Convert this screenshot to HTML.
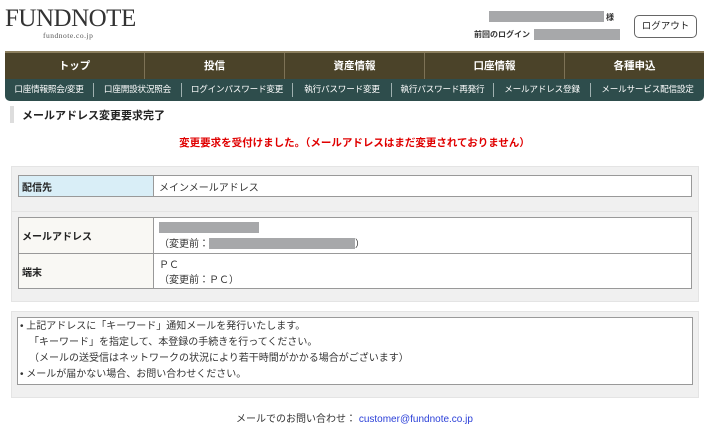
<!DOCTYPE html>
<html><head><meta charset="utf-8"><style>
*{margin:0;padding:0;box-sizing:border-box}
body{width:709px;height:427px;background:#fff;font-family:"Liberation Sans","Noto Sans CJK JP",sans-serif;color:#333;position:relative;overflow:hidden;font-size:10px}
.a{position:absolute}
.gray{background:#a7a8aa}
.nav{left:5px;top:51px;width:699px;height:28px;background:#4b4329;border-top:2px solid #8c7f5e;display:flex}
.nav div{flex:1;color:#fff;font-weight:bold;font-size:10.5px;text-align:center;line-height:26px;border-left:1px solid #7d7256}
.nav div:first-child{border-left:none}
.sub{left:5px;top:79px;width:699px;height:22px;background:#2e4d4c;border-radius:0 0 5px 5px;display:flex}
.sub div{flex:none;color:#fff;font-size:8.6px;text-align:center;white-space:nowrap;border-left:1px solid #a0b0b0;margin:4px 0;line-height:13px;overflow:hidden;letter-spacing:-0.2px}
.sub div:first-child{border-left:none}
.box{left:11px;width:688px;background:#f0f0f0;border:1px solid #e4e4e4}
table{border-collapse:collapse;position:absolute;left:6px;width:674px;background:#fff}
td{border:1px solid #999;font-size:10px;padding:0 5px;vertical-align:middle}
th{border:1px solid #999;font-size:10px;text-align:left;padding:0 3px;background:#f9f8f4;width:135px;font-weight:bold;color:#222}
</style></head><body>
<div class="a" style="left:5px;top:5px;font-family:'Liberation Serif',serif;font-size:25px;color:#333;letter-spacing:-0.5px">FUNDNOTE</div>
<div class="a" style="left:43px;top:31px;font-family:'Liberation Serif',serif;font-size:7.5px;color:#555;letter-spacing:.5px">fundnote.co.jp</div>
<div class="a gray" style="left:489px;top:11px;width:115px;height:11px"></div>
<div class="a" style="left:606px;top:12px;font-size:8px;font-weight:bold">様</div>
<div class="a" style="left:474px;top:29px;font-size:8px;font-weight:bold">前回のログイン</div>
<div class="a gray" style="left:534px;top:29px;width:86px;height:11px"></div>
<div class="a" style="left:634px;top:15px;width:63px;height:23px;border:1px solid #666;border-radius:5px;text-align:center;line-height:21px;font-size:9.5px;color:#222">ログアウト</div>
<div class="a nav"><div>トップ</div><div>投信</div><div>資産情報</div><div>口座情報</div><div>各種申込</div></div>
<div class="a sub"><div style="width:88px">口座情報照会/変更</div><div style="width:88px">口座開設状況照会</div><div style="width:111px">ログインパスワード変更</div><div style="width:99px">執行パスワード変更</div><div style="width:102px">執行パスワード再発行</div><div style="width:97px">メールアドレス登録</div><div style="width:114px">メールサービス配信設定</div></div>
<div class="a" style="left:10px;top:106px;width:4px;height:17px;background:#ddd"></div>
<div class="a" style="left:22px;top:107px;font-size:11px;font-weight:bold;color:#222">メールアドレス変更要求完了</div>
<div class="a" style="left:0;width:709px;top:135px;text-align:center;color:#e00000;font-weight:bold;font-size:10.5px">変更要求を受付けました。（メールアドレスはまだ変更されておりません）</div>
<div class="a box" style="top:166px;height:54px">
<table style="top:8px;height:22px"><tr><th style="background:#d9eef7">配信先</th><td>メインメールアドレス</td></tr></table>
</div>
<div class="a box" style="top:211px;height:91px">
<table style="top:5px"><tr style="height:36px"><th>メールアドレス</th><td><div class="gray" style="width:100px;height:11px"></div><div style="margin-top:2px">（変更前：<span class="gray" style="display:inline-block;width:146px;height:11px;vertical-align:middle"></span>）</div></td></tr>
<tr style="height:35px"><th>端末</th><td>ＰＣ<br>（変更前：ＰＣ）</td></tr></table>
</div>
<div class="a box" style="top:311px;height:87px">
<div class="a" style="left:5px;top:5px;width:676px;height:68px;background:#fff;border:1px solid #999;line-height:16px;padding:1px 0 0 2px;font-size:10px">
<div>• 上記アドレスに「キーワード」通知メールを発行いたします。</div>
<div style="padding-left:9px">「キーワード」を指定して、本登録の手続きを行ってください。<br>（メールの送受信はネットワークの状況により若干時間がかかる場合がございます）</div>
<div>• メールが届かない場合、お問い合わせください。</div>
</div></div>
<div class="a" style="left:0;width:709px;top:410px;text-align:center;font-size:10px">メールでのお問い合わせ： <span style="color:#2a3fd8">customer@fundnote.co.jp</span></div>
</body></html>
